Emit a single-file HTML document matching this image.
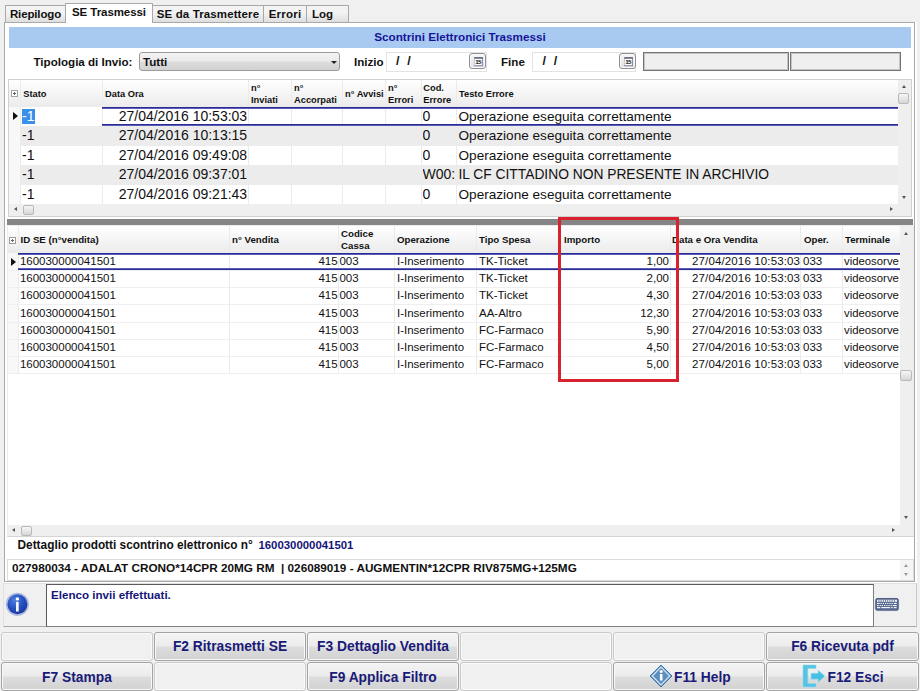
<!DOCTYPE html>
<html><head><meta charset="utf-8">
<title>Scontrini Elettronici Trasmessi</title>
<style>
html,body{margin:0;padding:0}
body{width:920px;height:691px;overflow:hidden;background:#f0f0f0;position:relative;
 font-family:"Liberation Sans",Arial,sans-serif;color:#111;}
.a{position:absolute;white-space:nowrap}
.b{font-weight:bold}
/* tabs */
.tab{position:absolute;top:5px;height:18px;border:1px solid #a9a9a9;border-bottom:none;
 background:linear-gradient(#f3f3f3 40%,#dcdcdc);font-weight:bold;font-size:11.5px;line-height:16px;text-align:center;box-sizing:border-box;height:18px}
.tab.sel{top:3px;height:20px;background:#fff;line-height:17px;z-index:3}
#page{position:absolute;left:4px;top:22px;width:911px;height:560px;border:1px solid #a9a9a9;background:#fff;box-sizing:border-box}
#band{position:absolute;left:9px;top:27px;width:902px;height:21px;background:#a9caf0;color:#15159a;
 font-weight:bold;font-size:11.7px;line-height:20px;text-align:center}
.lbl{font-weight:bold;font-size:11.6px;line-height:16px}
.inp{position:absolute;box-sizing:border-box;border:1px solid #e3e3e3;background:#fff}
.dis{position:absolute;box-sizing:border-box;border:1px solid #747474;background:#efefef;box-shadow:inset 0 0 0 1px #c4c4c4}
.calb{position:absolute;width:17px;height:16px;box-sizing:border-box;border:1px solid #8f8f8f;border-radius:3px;background:linear-gradient(#f7f7f7,#dfdfe6);box-shadow:inset 0 0 0 1px #fbfbfb}
/* grids */
.grid{position:absolute;box-sizing:border-box;border:1px solid #d0d0d0;background:#fff;overflow:hidden}
.hdr{position:absolute;left:0;top:0;right:0;background:linear-gradient(#fff,#f3f3f3 60%,#ebebeb)}
.h{position:absolute;font-weight:bold;font-size:9.3px;line-height:12px;white-space:nowrap;color:#111}
.vs{position:absolute;width:1px;background:#ebebeb}
.row{position:absolute;left:0}
.c{position:absolute;white-space:nowrap}
.g2 .h{font-size:9.7px}
.g1 .c{font-size:14px;line-height:19px}
.g2 .c{font-size:11.5px;line-height:17px}
.sbh{position:absolute;background:#efefef;}
.thumb{position:absolute;box-sizing:border-box;border:1px solid #b9b9b9;border-radius:2px;background:linear-gradient(#f6f6f6,#d6d6d6)}
.btn{position:absolute;box-sizing:border-box;border:1px solid #a3a3a3;border-radius:3px;height:28.5px;
 background:linear-gradient(#f4f4f4 0%,#ececec 48%,#dddddd 52%,#d2d2d2 100%);
 font-weight:bold;font-size:13.8px;line-height:28px;text-align:center;color:#1a1a78;box-shadow:inset 0 0 0 1px #f8f8f8}
.btn.r2{height:29px;line-height:30px}
.btn.e{background:#f0f0f0;border-color:#c9c9c9;box-shadow:inset 0 0 0 1px #fafafa}
</style></head>
<body>
<!-- TABS -->
<div class="tab" style="left:5px;width:61px;letter-spacing:-.13px">Riepilogo</div>
<div class="tab sel" style="left:65px;width:88px;letter-spacing:-.07px">SE Trasmessi</div>
<div class="tab" style="left:152px;width:112px;letter-spacing:.12px">SE da Trasmettere</div>
<div class="tab" style="left:263px;width:44px;letter-spacing:.22px">Errori</div>
<div class="tab" style="left:306px;width:43px;text-align:left;padding-left:5px">Log</div>
<div class="a" style="left:4px;top:22px;width:913px;height:561.3px;background:#fff"></div>
<div id="page"></div>
<div id="band">Scontrini Elettronici Trasmessi</div>

<!-- FILTER ROW -->
<div class="a lbl" style="left:33.5px;top:53.5px">Tipologia di Invio:</div>
<div class="a" style="left:139px;top:52px;width:201px;height:19px;box-sizing:border-box;border:1px solid #9c9c9c;border-radius:3px;background:linear-gradient(#f3f3f3,#ebebeb 45%,#dcdcdc 55%,#d2d2d2)">
  <span class="a lbl" style="left:3px;top:0.5px">Tutti</span>
  <span class="a" style="left:191px;top:8px;width:0;height:0;border-left:3px solid transparent;border-right:3px solid transparent;border-top:3px solid #222"></span>
</div>
<div class="a lbl" style="left:354px;top:53.5px">Inizio</div>
<div class="inp" style="left:386px;top:52px;width:101px;height:20px"></div>
<div class="a lbl" style="left:396px;top:52.5px;font-size:12.5px;letter-spacing:.3px">/&nbsp;&nbsp;/</div>
<div class="calb" style="left:469px;top:53px"><svg class="a" style="left:3.6px;top:2.6px" width="10" height="10" viewBox="0 0 10 10"><rect x="0.3" y="0.5" width="8.6" height="8.8" fill="#8585a6"/><rect x="0.6" y="0.4" width="7.3" height="7.8" fill="#fff"/><rect x="0.3" y="0.2" width="8.4" height="1.5" fill="#55556f"/><text x="4.1" y="7.3" font-size="6.2" font-weight="bold" text-anchor="middle" fill="#111" font-family="Liberation Sans, sans-serif" letter-spacing="-0.5">15</text></svg></div>
<div class="a lbl" style="left:501px;top:53.5px">Fine</div>
<div class="inp" style="left:532px;top:52px;width:104px;height:20px"></div>
<div class="a lbl" style="left:542.5px;top:52.5px;font-size:12.5px;letter-spacing:.3px">/&nbsp;&nbsp;/</div>
<div class="calb" style="left:619px;top:53px"><svg class="a" style="left:3.6px;top:2.6px" width="10" height="10" viewBox="0 0 10 10"><rect x="0.3" y="0.5" width="8.6" height="8.8" fill="#8585a6"/><rect x="0.6" y="0.4" width="7.3" height="7.8" fill="#fff"/><rect x="0.3" y="0.2" width="8.4" height="1.5" fill="#55556f"/><text x="4.1" y="7.3" font-size="6.2" font-weight="bold" text-anchor="middle" fill="#111" font-family="Liberation Sans, sans-serif" letter-spacing="-0.5">15</text></svg></div>
<div class="dis" style="left:643px;top:52px;width:146px;height:19px"></div>
<div class="dis" style="left:790px;top:52px;width:111px;height:19px"></div>

<!-- GRID 1 -->
<div class="grid g1" id="g1" style="left:8px;top:79px;width:904px;height:138px">
<div class="hdr" style="height:27px"></div>
<div class="a" style="left:11px;top:46px;width:878px;height:20px;background:#ececec"></div>
<div class="a" style="left:11px;top:85px;width:878px;height:20px;background:#ececec"></div>
<div class="a" style="left:0;top:27px;width:11px;height:97px;background:#f8f8f8"></div>
<div class="vs" style="left:10.5px;top:0;height:124px"></div>
<div class="vs" style="left:93px;top:0;height:124px"></div>
<div class="vs" style="left:239px;top:0;height:124px"></div>
<div class="vs" style="left:282.3px;top:0;height:124px"></div>
<div class="vs" style="left:333.3px;top:0;height:124px"></div>
<div class="vs" style="left:376.4px;top:0;height:124px"></div>
<div class="vs" style="left:411.6px;top:0;height:124px"></div>
<div class="vs" style="left:447px;top:0;height:124px"></div>
<div class="a" style="left:2px;top:10px;width:5px;height:5px;border:1px solid #a4a4a4;background:#fff;font-size:0"><i style="position:absolute;left:1px;top:2px;width:3px;height:1px;background:#666"></i><i style="position:absolute;left:2px;top:1px;width:1px;height:3px;background:#666"></i></div>
<div class="h" style="left:14.3px;top:7.599999999999994px">Stato</div>
<div class="h" style="left:96px;top:7.599999999999994px">Data Ora</div>
<div class="h" style="left:242px;top:1.5999999999999943px">n°<br>Inviati</div>
<div class="h" style="left:285px;top:1.5999999999999943px">n°<br>Accorpati</div>
<div class="h" style="left:336px;top:7.799999999999997px">n° Avvisi</div>
<div class="h" style="left:379px;top:1.5999999999999943px">n°<br>Errori</div>
<div class="h" style="left:414.3px;top:1.5999999999999943px">Cod.<br>Errore</div>
<div class="h" style="left:450px;top:7.599999999999994px">Testo Errore</div>
<div class="a" style="left:12.7px;top:28.799999999999997px;width:13px;height:15.4px;background:#3a8fe8"></div>
<div class="c" style="left:13px;top:27.3px;color:#fff">-1</div>
<div class="c" style="left:109.7px;top:27.3px">27/04/2016 10:53:03</div>
<div class="c" style="left:413.5px;top:27.3px;width:32.10000000000002px;overflow:hidden">0</div>
<div class="c" style="left:449.5px;top:27.3px;font-size:13.6px">Operazione eseguita correttamente</div>
<div class="c" style="left:13px;top:46.3px">-1</div>
<div class="c" style="left:109.7px;top:46.3px">27/04/2016 10:13:15</div>
<div class="c" style="left:413.5px;top:46.3px;width:32.10000000000002px;overflow:hidden">0</div>
<div class="c" style="left:449.5px;top:46.3px;font-size:13.6px">Operazione eseguita correttamente</div>
<div class="c" style="left:13px;top:66.3px">-1</div>
<div class="c" style="left:109.7px;top:66.3px">27/04/2016 09:49:08</div>
<div class="c" style="left:413.5px;top:66.3px;width:32.10000000000002px;overflow:hidden">0</div>
<div class="c" style="left:449.5px;top:66.3px;font-size:13.6px">Operazione eseguita correttamente</div>
<div class="c" style="left:13px;top:85.3px">-1</div>
<div class="c" style="left:109.7px;top:85.3px">27/04/2016 09:37:01</div>
<div class="c" style="left:413.5px;top:85.3px;width:32.10000000000002px;overflow:hidden">W00:</div>
<div class="c" style="left:449.5px;top:85.3px;font-size:13.8px">IL CF CITTADINO NON PRESENTE IN ARCHIVIO</div>
<div class="c" style="left:13px;top:105.3px">-1</div>
<div class="c" style="left:109.7px;top:105.3px">27/04/2016 09:21:43</div>
<div class="c" style="left:413.5px;top:105.3px;width:32.10000000000002px;overflow:hidden">0</div>
<div class="c" style="left:449.5px;top:105.3px;font-size:13.6px">Operazione eseguita correttamente</div>
<div class="a" style="left:93px;top:27px;width:796px;height:2px;background:linear-gradient(#2a2a9a 50%,#5c5cb4 50%)"></div>
<div class="a" style="left:93px;top:44px;width:796px;height:2px;background:linear-gradient(#2a2a9a 50%,#5c5cb4 50%)"></div>
<div class="a" style="left:4px;top:32px;width:0;height:0;border-top:4px solid transparent;border-bottom:4px solid transparent;border-left:5px solid #111"></div>
<div class="sbh" style="left:889px;top:0;width:13px;height:124px"></div>
<div class="thumb" style="left:889px;top:13px;width:11px;height:11px"></div>
<div class="a" style="left:892.8px;top:5px;width:0;height:0;border-left:2.5px solid transparent;border-right:2.5px solid transparent;border-bottom:3px solid #555"></div>
<div class="a" style="left:892.8px;top:115.5px;width:0;height:0;border-left:2.5px solid transparent;border-right:2.5px solid transparent;border-top:3px solid #555"></div>
<div class="sbh" style="left:0;top:124px;width:903px;height:12px"></div>
<div class="thumb" style="left:14px;top:125px;width:11px;height:10px"></div>
<div class="a" style="left:5px;top:127px;width:0;height:0;border-top:2.5px solid transparent;border-bottom:2.5px solid transparent;border-right:3px solid #555"></div>
<div class="a" style="left:880.7px;top:127px;width:0;height:0;border-top:2.5px solid transparent;border-bottom:2.5px solid transparent;border-left:3px solid #555"></div>
</div>

<!-- SPLITTER -->
<div class="a" style="left:7px;top:219.3px;width:906px;height:5.9px;background:#858585"></div>

<!-- GRID 2 -->
<div class="grid g2" id="g2" style="left:7px;top:225px;width:907px;height:312px;border-color:#ececec #ececec #d4d4d4 #ececec">
<div class="hdr" style="height:27px"></div>
<div class="a" style="left:0;top:27px;width:10px;height:120px;background:#f8f8f8"></div>
<div class="vs" style="left:10px;top:0;height:147px"></div>
<div class="vs" style="left:221px;top:0;height:147px"></div>
<div class="vs" style="left:330px;top:0;height:147px"></div>
<div class="vs" style="left:386px;top:0;height:147px"></div>
<div class="vs" style="left:468px;top:0;height:147px"></div>
<div class="vs" style="left:552px;top:0;height:147px"></div>
<div class="vs" style="left:662px;top:0;height:147px"></div>
<div class="vs" style="left:792px;top:0;height:147px"></div>
<div class="vs" style="left:834px;top:0;height:147px"></div>
<div class="a" style="left:0;top:44px;width:892px;height:1px;background:#efefef"></div>
<div class="a" style="left:0;top:61px;width:892px;height:1px;background:#efefef"></div>
<div class="a" style="left:0;top:78px;width:892px;height:1px;background:#efefef"></div>
<div class="a" style="left:0;top:96px;width:892px;height:1px;background:#efefef"></div>
<div class="a" style="left:0;top:113px;width:892px;height:1px;background:#efefef"></div>
<div class="a" style="left:0;top:130px;width:892px;height:1px;background:#efefef"></div>
<div class="a" style="left:0;top:147px;width:892px;height:1px;background:#efefef"></div>
<div class="a" style="left:1px;top:10.5px;width:5px;height:5px;border:1px solid #9a9a9a;background:#fff;font-size:0"><i style="position:absolute;left:1px;top:2px;width:3px;height:1px;background:#666"></i><i style="position:absolute;left:2px;top:1px;width:1px;height:3px;background:#666"></i></div>
<div class="h" style="left:12.5px;top:8px">ID SE (n°vendita)</div>
<div class="h" style="left:224px;top:8px">n° Vendita</div>
<div class="h" style="left:333px;top:2px">Codice<br>Cassa</div>
<div class="h" style="left:389px;top:8px">Operazione</div>
<div class="h" style="left:471px;top:8px">Tipo Spesa</div>
<div class="h" style="left:556px;top:8px">Importo</div>
<div class="h" style="left:664px;top:8px">Data e Ora Vendita</div>
<div class="h" style="left:796px;top:8px">Oper.</div>
<div class="h" style="left:837px;top:8px">Terminale</div>
<div class="c" style="left:11.899999999999999px;top:26.85px">160030000041501</div>
<div class="c" style="left:221px;top:26.85px;width:108.60000000000002px;text-align:right">415</div>
<div class="c" style="left:331.4px;top:26.85px">003</div>
<div class="c" style="left:389px;top:26.85px">I-Inserimento</div>
<div class="c" style="left:471px;top:26.85px">TK-Ticket</div>
<div class="c" style="left:552px;top:26.85px;width:109px;text-align:right">1,00</div>
<div class="c" style="left:662px;top:26.85px;width:130.10000000000002px;text-align:right;letter-spacing:.135px">27/04/2016 10:53:03</div>
<div class="c" style="left:795px;top:26.85px">033</div>
<div class="c" style="left:836px;top:26.85px;width:54.60000000000002px;overflow:hidden;font-size:11.35px">videosorveglianza</div>
<div class="c" style="left:11.899999999999999px;top:44.12px">160030000041501</div>
<div class="c" style="left:221px;top:44.12px;width:108.60000000000002px;text-align:right">415</div>
<div class="c" style="left:331.4px;top:44.12px">003</div>
<div class="c" style="left:389px;top:44.12px">I-Inserimento</div>
<div class="c" style="left:471px;top:44.12px">TK-Ticket</div>
<div class="c" style="left:552px;top:44.12px;width:109px;text-align:right">2,00</div>
<div class="c" style="left:662px;top:44.12px;width:130.10000000000002px;text-align:right;letter-spacing:.135px">27/04/2016 10:53:03</div>
<div class="c" style="left:795px;top:44.12px">033</div>
<div class="c" style="left:836px;top:44.12px;width:54.60000000000002px;overflow:hidden;font-size:11.35px">videosorveglianza</div>
<div class="c" style="left:11.899999999999999px;top:61.39px">160030000041501</div>
<div class="c" style="left:221px;top:61.39px;width:108.60000000000002px;text-align:right">415</div>
<div class="c" style="left:331.4px;top:61.39px">003</div>
<div class="c" style="left:389px;top:61.39px">I-Inserimento</div>
<div class="c" style="left:471px;top:61.39px">TK-Ticket</div>
<div class="c" style="left:552px;top:61.39px;width:109px;text-align:right">4,30</div>
<div class="c" style="left:662px;top:61.39px;width:130.10000000000002px;text-align:right;letter-spacing:.135px">27/04/2016 10:53:03</div>
<div class="c" style="left:795px;top:61.39px">033</div>
<div class="c" style="left:836px;top:61.39px;width:54.60000000000002px;overflow:hidden;font-size:11.35px">videosorveglianza</div>
<div class="c" style="left:11.899999999999999px;top:78.66px">160030000041501</div>
<div class="c" style="left:221px;top:78.66px;width:108.60000000000002px;text-align:right">415</div>
<div class="c" style="left:331.4px;top:78.66px">003</div>
<div class="c" style="left:389px;top:78.66px">I-Inserimento</div>
<div class="c" style="left:471px;top:78.66px">AA-Altro</div>
<div class="c" style="left:552px;top:78.66px;width:109px;text-align:right">12,30</div>
<div class="c" style="left:662px;top:78.66px;width:130.10000000000002px;text-align:right;letter-spacing:.135px">27/04/2016 10:53:03</div>
<div class="c" style="left:795px;top:78.66px">033</div>
<div class="c" style="left:836px;top:78.66px;width:54.60000000000002px;overflow:hidden;font-size:11.35px">videosorveglianza</div>
<div class="c" style="left:11.899999999999999px;top:95.93px">160030000041501</div>
<div class="c" style="left:221px;top:95.93px;width:108.60000000000002px;text-align:right">415</div>
<div class="c" style="left:331.4px;top:95.93px">003</div>
<div class="c" style="left:389px;top:95.93px">I-Inserimento</div>
<div class="c" style="left:471px;top:95.93px">FC-Farmaco</div>
<div class="c" style="left:552px;top:95.93px;width:109px;text-align:right">5,90</div>
<div class="c" style="left:662px;top:95.93px;width:130.10000000000002px;text-align:right;letter-spacing:.135px">27/04/2016 10:53:03</div>
<div class="c" style="left:795px;top:95.93px">033</div>
<div class="c" style="left:836px;top:95.93px;width:54.60000000000002px;overflow:hidden;font-size:11.35px">videosorveglianza</div>
<div class="c" style="left:11.899999999999999px;top:113.2px">160030000041501</div>
<div class="c" style="left:221px;top:113.2px;width:108.60000000000002px;text-align:right">415</div>
<div class="c" style="left:331.4px;top:113.2px">003</div>
<div class="c" style="left:389px;top:113.2px">I-Inserimento</div>
<div class="c" style="left:471px;top:113.2px">FC-Farmaco</div>
<div class="c" style="left:552px;top:113.2px;width:109px;text-align:right">4,50</div>
<div class="c" style="left:662px;top:113.2px;width:130.10000000000002px;text-align:right;letter-spacing:.135px">27/04/2016 10:53:03</div>
<div class="c" style="left:795px;top:113.2px">033</div>
<div class="c" style="left:836px;top:113.2px;width:54.60000000000002px;overflow:hidden;font-size:11.35px">videosorveglianza</div>
<div class="c" style="left:11.899999999999999px;top:130.47px">160030000041501</div>
<div class="c" style="left:221px;top:130.47px;width:108.60000000000002px;text-align:right">415</div>
<div class="c" style="left:331.4px;top:130.47px">003</div>
<div class="c" style="left:389px;top:130.47px">I-Inserimento</div>
<div class="c" style="left:471px;top:130.47px">FC-Farmaco</div>
<div class="c" style="left:552px;top:130.47px;width:109px;text-align:right">5,00</div>
<div class="c" style="left:662px;top:130.47px;width:130.10000000000002px;text-align:right;letter-spacing:.135px">27/04/2016 10:53:03</div>
<div class="c" style="left:795px;top:130.47px">033</div>
<div class="c" style="left:836px;top:130.47px;width:54.60000000000002px;overflow:hidden;font-size:11.35px">videosorveglianza</div>
<div class="a" style="left:10px;top:27px;width:882px;height:2px;background:linear-gradient(#2a2a9a 50%,#5c5cb4 50%)"></div>
<div class="a" style="left:10px;top:42px;width:882px;height:2px;background:linear-gradient(#5c5cb4 50%,#2a2a9a 50%)"></div>
<div class="a" style="left:3.4000000000000004px;top:32px;width:0;height:0;border-top:4px solid transparent;border-bottom:4px solid transparent;border-left:5px solid #111"></div>
<div class="sbh" style="left:892px;top:0;width:14px;height:299px"></div>
<div class="thumb" style="left:892px;top:144.39999999999998px;width:11.6px;height:10.6px"></div>
<div class="a" style="left:896.3px;top:5.5px;width:0;height:0;border-left:2.5px solid transparent;border-right:2.5px solid transparent;border-bottom:3px solid #555"></div>
<div class="a" style="left:896.3px;top:290.29999999999995px;width:0;height:0;border-left:2.5px solid transparent;border-right:2.5px solid transparent;border-top:3px solid #555"></div>
<div class="sbh" style="left:0;top:299px;width:906px;height:12px"></div>
<div class="thumb" style="left:13px;top:300px;width:11px;height:10px"></div>
<div class="a" style="left:3.5px;top:302px;width:0;height:0;border-top:2.5px solid transparent;border-bottom:2.5px solid transparent;border-right:3px solid #555"></div>
<div class="a" style="left:883.7px;top:301.5px;width:0;height:0;border-top:2.5px solid transparent;border-bottom:2.5px solid transparent;border-left:3px solid #555"></div>
</div>

<!-- RED HIGHLIGHT -->
<div class="a" style="left:558px;top:217.3px;width:121px;height:165.2px;box-sizing:border-box;border:3.4px solid #d8232f;z-index:5"></div>

<!-- DETAIL -->
<div class="a lbl" style="left:17.5px;top:537px;font-size:11.87px">Dettaglio prodotti scontrino elettronico n°</div>
<div class="a lbl" style="left:258.4px;top:537px;font-size:11.4px;color:#15157a">160030000041501</div>
<div class="inp" style="left:7px;top:558.6px;width:907px;height:22px;border-color:#dcdcdc"></div>
<div class="a" style="left:900.4px;top:559.6px;width:12.6px;height:20.4px;background:#f5f5f5"></div>
<div class="a" style="left:904px;top:564px;width:0;height:0;border-left:2.6px solid transparent;border-right:2.6px solid transparent;border-bottom:3px solid #9a9a9a"></div>
<div class="a" style="left:904px;top:572.5px;width:0;height:0;border-left:2.6px solid transparent;border-right:2.6px solid transparent;border-top:3px solid #9a9a9a"></div>
<div class="a lbl" style="left:12px;top:559.5px;font-size:11.75px">027980034 - ADALAT CRONO*14CPR 20MG RM&nbsp; | 026089019 - AUGMENTIN*12CPR RIV875MG+125MG</div>

<!-- INFO PANEL -->
<div class="a" style="left:3px;top:583px;width:914px;height:44px;box-sizing:border-box;border:1px solid #e2e2e2;border-bottom-color:#a8a8a8;border-right-color:#c8c8c8"></div>
<svg class="a" style="left:4px;top:591px" width="27" height="27" viewBox="0 0 27 27">
  <defs><radialGradient id="ig" cx="38%" cy="30%" r="75%"><stop offset="0" stop-color="#4f7fe0"/><stop offset="0.55" stop-color="#2850c0"/><stop offset="1" stop-color="#1a3596"/></radialGradient></defs>
  <circle cx="13.4" cy="13.3" r="11.6" fill="#aebbe0"/>
  <circle cx="13.4" cy="13.3" r="10" fill="url(#ig)"/>
  <circle cx="13.4" cy="7.9" r="1.7" fill="#fff"/>
  <rect x="12" y="10.8" width="2.7" height="9.8" rx="0.6" fill="#f4f6ff"/>
</svg>
<div class="a" style="left:46px;top:584px;width:828px;height:43px;box-sizing:border-box;border:1px solid #7f7f7f;border-top-color:#5a5a5a;border-left-color:#5a5a5a;background:#fff"></div>
<div class="a lbl" style="left:51px;top:587px;color:#15157a">Elenco invii effettuati.</div>
<svg class="a" style="left:875.2px;top:598px;overflow:visible" width="24" height="13" viewBox="0 0 24 13">
  <rect x="-0.4" y="-0.4" width="24.8" height="13.8" rx="2.8" fill="#fafafa"/><rect x="0.4" y="0.4" width="23.2" height="12.2" rx="2.2" fill="#56688f" stroke="#46567c" stroke-width="0.6"/><rect x="1.2" y="0.4" width="21.6" height="0.9" fill="#3f4d70"/>
  <g fill="#fff">
   <rect x="2" y="1.7" width="20" height="2.1" opacity=".9"/>
   <g fill="#56688f"><rect x="3.5" y="1.7" width=".8" height="2.1"/><rect x="5.7" y="1.7" width=".8" height="2.1"/><rect x="7.9" y="1.7" width=".8" height="2.1"/><rect x="10.1" y="1.7" width=".8" height="2.1"/><rect x="12.3" y="1.7" width=".8" height="2.1"/><rect x="14.5" y="1.7" width=".8" height="2.1"/><rect x="16.7" y="1.7" width=".8" height="2.1"/><rect x="18.9" y="1.7" width=".8" height="2.1"/></g>
   <rect x="2" y="4.9" width="2.6" height="1.1"/><rect x="5.6" y="4.9" width="1.2" height="1.1"/><rect x="7.8" y="4.9" width="1.2" height="1.1"/><rect x="10" y="4.9" width="1.2" height="1.1"/><rect x="12.2" y="4.9" width="1.2" height="1.1"/><rect x="14.4" y="4.9" width="1.2" height="1.1"/><rect x="16.6" y="4.9" width="1.2" height="1.1"/><rect x="18.8" y="4.9" width="2.8" height="1.1"/>
   <rect x="2" y="7" width="1.6" height="1.1"/><rect x="4.6" y="7" width="1.2" height="1.1"/><rect x="6.8" y="7" width="1.2" height="1.1"/><rect x="9" y="7" width="1.2" height="1.1"/><rect x="11.2" y="7" width="1.2" height="1.1"/><rect x="13.4" y="7" width="1.2" height="1.1"/><rect x="15.6" y="7" width="1.2" height="1.1"/><rect x="17.8" y="7" width="3.8" height="1.1"/>
   <rect x="2" y="9.1" width="3.2" height="1.1"/><rect x="6.2" y="9.1" width="9" height="1.1"/><rect x="16.2" y="9.1" width="1.6" height="1.1"/><rect x="18.8" y="9.1" width="2.8" height="1.1"/>
  </g>
</svg>

<!-- BUTTONS -->
<div class="btn e" style="left:1px;top:632px;width:152px"></div>
<div class="btn" style="left:154px;top:632px;width:152px">F2 Ritrasmetti SE</div>
<div class="btn" style="left:307px;top:632px;width:152px">F3 Dettaglio Vendita</div>
<div class="btn e" style="left:460px;top:632px;width:152px"></div>
<div class="btn e" style="left:613px;top:632px;width:152px"></div>
<div class="btn" style="left:766px;top:632px;width:153px">F6 Ricevuta pdf</div>
<div class="btn r2" style="left:1px;top:662px;width:152px">F7 Stampa</div>
<div class="btn e r2" style="left:154px;top:662px;width:152px"></div>
<div class="btn r2" style="left:307px;top:662px;width:152px">F9 Applica Filtro</div>
<div class="btn e r2" style="left:460px;top:662px;width:152px"></div>
<div class="btn r2" style="left:613px;top:662px;width:152px;text-align:left"><span class="a" style="left:60px;top:0">F11 Help</span>
 <svg class="a" style="left:35.4px;top:0.9px" width="24" height="24" viewBox="0 0 24 24">
  <path d="M12 1 L23 12 L12 23 L1 12 Z" fill="#5d8fbe" stroke="#3f74ab" stroke-width="1"/>
  <path d="M12 3.2 L20.8 12 L12 20.8 L3.2 12 Z" fill="none" stroke="#d6e6f4" stroke-width="1.2"/>
  <circle cx="12.2" cy="7.6" r="1.5" fill="#fff"/><rect x="10.9" y="10" width="2.6" height="6.6" rx=".5" fill="#fff"/>
 </svg></div>
<div class="btn r2" style="left:766px;top:662px;width:153px;text-align:left"><span class="a" style="left:60.5px;top:0">F12 Esci</span>
 <svg class="a" style="left:35.2px;top:1px" width="24" height="24" viewBox="0 0 24 24">
  <path d="M1 1 H14 V4.6 H5.8 V19.4 H14 V23 H1 Z" fill="#56c3e2" stroke="#8fd8ee" stroke-width=".6"/>
  <path d="M9 9.2 H16 V6 L23 12.2 L16 18.4 V15.2 H9 Z" fill="#45bfe4" stroke="#a5e2f2" stroke-width=".6"/>
 </svg></div>
</body></html>
